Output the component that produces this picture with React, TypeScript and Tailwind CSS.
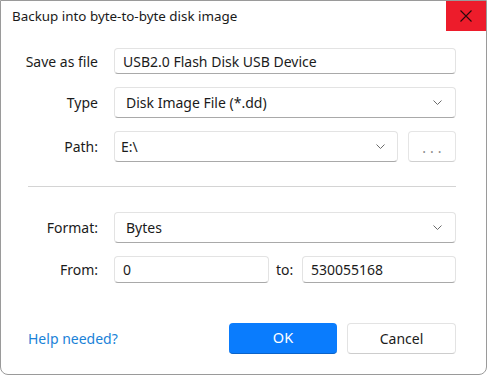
function Chevron() {
  return (
    <svg width="9" height="5" viewBox="0 0 9 5" className="shrink-0">
      <path d="M0.5 0.5 L4.5 4.5 L8.5 0.5" fill="none" stroke="#6b6b6b" strokeWidth="1" />
    </svg>
  );
}

export default function App() {
  const field = "border border-[#e3e3e3] border-b-[#a9a9a9] rounded-[4px] bg-white flex items-center";
  return (
    <div className="w-[487px] h-[375px] bg-white border border-[#9a9a9a] rounded-b-[8px] flex flex-col overflow-hidden font-['Noto_Sans',sans-serif] text-[14px] text-[#1b1b1b]">
      <div className="flex h-[30px] items-center shrink-0">
        <div className="flex-1 pl-[11px] text-[13.4px] text-[#1a1a1a]">Backup into byte-to-byte disk image</div>
        <div className="w-[40px] h-[30px] bg-[#ed1c2b] flex items-center justify-center">
          <svg width="12" height="12" viewBox="0 0 12 12">
            <path d="M0.5 0.5 L11.5 11.5 M11.5 0.5 L0.5 11.5" stroke="#2a0a0c" strokeWidth="1.1" />
          </svg>
        </div>
      </div>

      <div className="flex flex-col pr-[30px]">
        <div className="flex items-center mt-[17px] h-[26px]">
          <div className="w-[97px] text-right">Save as file</div>
          <div className={`${field} ml-[16px] flex-1 h-full pl-[8px]`}>USB2.0 Flash Disk USB Device</div>
        </div>

        <div className="flex items-center mt-[13px] h-[31px]">
          <div className="w-[97px] text-right">Type</div>
          <div className={`${field} ml-[16px] flex-1 h-full pl-[11px] pr-[13px] justify-between`}>
            <span>Disk Image File (*.dd)</span>
            <Chevron />
          </div>
        </div>

        <div className="flex items-center mt-[13px] h-[31px]">
          <div className="w-[97px] text-right">Path:</div>
          <div className={`${field} ml-[16px] flex-1 h-full pl-[6px] pr-[12px] justify-between`}>
            <span>E:\</span>
            <Chevron />
          </div>
          <div className="ml-[10px] w-[48px] h-full border border-[#e5e5e5] border-b-[#cfcfcf] rounded-[4px] flex items-center justify-center text-[#8a8a8a] tracking-[4px] pl-[4px] pt-[1px]">
            ...
          </div>
        </div>

        <div className="mt-[24px] ml-[27px] h-px bg-[#d4d4d4]"></div>

        <div className="flex items-center mt-[25px] h-[31px]">
          <div className="w-[97px] text-right">Format:</div>
          <div className={`${field} ml-[16px] flex-1 h-full pl-[11px] pr-[13px] justify-between`}>
            <span>Bytes</span>
            <Chevron />
          </div>
        </div>

        <div className="flex items-center mt-[13px] h-[27px]">
          <div className="w-[97px] text-right">From:</div>
          <div className={`${field} ml-[16px] w-[155px] h-full pl-[8px]`}>0</div>
          <div className="w-[33px] pl-[7px]">to:</div>
          <div className={`${field} flex-1 h-full pl-[8px]`}>530055168</div>
        </div>

        <div className="flex items-center mt-[40px] h-[31px]">
          <div className="flex-1 pl-[27px] text-[14px] text-[#1a82d8]">Help needed?</div>
          <div className="w-[108px] h-full rounded-[4px] bg-[#0a7cfd] border-b border-[#0a63c9] flex items-center justify-center text-white text-[14.5px]">OK</div>
          <div className="ml-[10px] w-[109px] h-full rounded-[4px] border border-[#e3e3e3] border-b-[#cdcdcd] flex items-center justify-center text-[14px]">Cancel</div>
        </div>
      </div>
    </div>
  );
}
